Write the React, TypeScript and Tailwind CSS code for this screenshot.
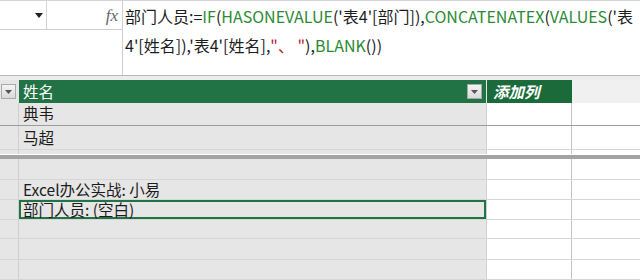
import React from "react";

const G = "text-[#2b8a34]";
const R = "text-[#b4232a]";

function DropBtn() {
  return (
    <div className="w-[15px] h-[15px] border border-[#a9a9a9] bg-gradient-to-b from-[#f4f4f4] to-[#d9d9d9] flex items-center justify-center">
      <svg width="7" height="4" viewBox="0 0 7 4">
        <path d="M0 0h7L3.5 4z" fill="#555" />
      </svg>
    </div>
  );
}

type RowProps = {
  h: string;
  text?: string;
  selected?: boolean;
  line?: string;
};

function Row({ h, text, selected, line = "border-[#d6d6d6]" }: RowProps) {
  return (
    <div className={`flex ${h} border-b ${line}`}>
      <div className="w-[19px] shrink-0 bg-[#e6e6e6] border-r border-[#cfcfcf]" />
      <div
        className={`w-[467px] shrink-0 bg-[#e6e6e6] flex items-center ${
          selected ? "border-2 border-[#217346] pl-[2px]" : "pl-[4px]"
        }`}
      >
        {text && <span className="text-[15.5px] text-[#1c1c1c] leading-none">{text}</span>}
      </div>
      <div className="w-[86px] shrink-0 bg-white border-l border-[#d0d0d0] border-r border-r-[#c4c4c4]" />
      <div className="flex-1 bg-white" />
    </div>
  );
}

export default function App() {
  return (
    <div
      className="w-[640px] h-[280px] overflow-hidden bg-white flex flex-col"
      style={{ fontFamily: '"Noto Sans CJK SC", "Noto Sans", sans-serif' }}
    >
      {/* Formula bar */}
      <div className="flex h-[76px] shrink-0 border-t border-[#d4d4d4] border-b border-b-[#b8b8b8]">
        <div className="w-[122px] shrink-0 flex flex-col">
          <div className="flex h-[29px] border-b border-[#cfcfcf]">
            <div className="w-[47px] border-r border-[#d4d4d4] flex items-center justify-end pr-[3px]">
              <svg width="8" height="5" viewBox="0 0 8 5">
                <path d="M0 0h8L4 5z" fill="#222" />
              </svg>
            </div>
            <div className="flex-1 flex items-center justify-end pr-[4px]">
              <span
                className="italic text-[17px] text-[#666] leading-none"
                style={{ fontFamily: '"Liberation Serif", serif' }}
              >
                fx
              </span>
            </div>
          </div>
          <div className="flex-1" />
        </div>
        <div className="flex-1 border-l border-[#cfcfcf] pl-[2px] text-[16px] text-[#1c1c1c] whitespace-nowrap">
          <div className="h-[29px] flex items-center">
            部门人员:=<span className={G}>IF</span>(<span className={G}>HASONEVALUE</span>('表4'[部门]),
            <span className={G}>CONCATENATEX</span>(<span className={G}>VALUES</span>('表
          </div>
          <div className="h-[29px] flex items-center">
            4'[姓名]),'表4'[姓名],<span className={R}>"、 "</span>),<span className={G}>BLANK</span>())
          </div>
        </div>
      </div>
      <div className="h-[4px] shrink-0 bg-[#ececec]" />

      {/* Table header */}
      <div className="flex h-[23px] shrink-0">
        <div className="w-[19px] shrink-0 bg-[#e6e6e6] flex items-center pl-[1px]">
          <DropBtn />
        </div>
        <div className="w-[467px] shrink-0 bg-[#217346] flex items-center justify-between pl-[4px] pr-[4px]">
          <span className="text-[15.5px] text-white leading-none">姓名</span>
          <DropBtn />
        </div>
        <div className="w-[86px] shrink-0 bg-[#1b6b3a] border-l border-[#e6e6e6] flex items-center pl-[6px]">
          <span className="text-[15.5px] text-white italic font-bold leading-none">添加列</span>
        </div>
        <div className="flex-1 bg-[#f0f0f0]" />
      </div>

      <Row h="h-[24px]" text="典韦" line="border-[#9c9c9c]" />
      <Row h="h-[25px]" text="马超" />
      <Row h="h-[5px]" line="border-transparent" />
      <div className="h-[4px] shrink-0 bg-[#a3a3a3]" />
      <Row h="h-[21px]" />
      <Row h="h-[21px]" text="Excel办公实战: 小易" />
      <Row h="h-[20px]" text="部门人员: (空白)" selected />
      <Row h="h-[20px]" />
      <Row h="h-[21px]" />
      <Row h="h-[21px]" />
    </div>
  );
}
